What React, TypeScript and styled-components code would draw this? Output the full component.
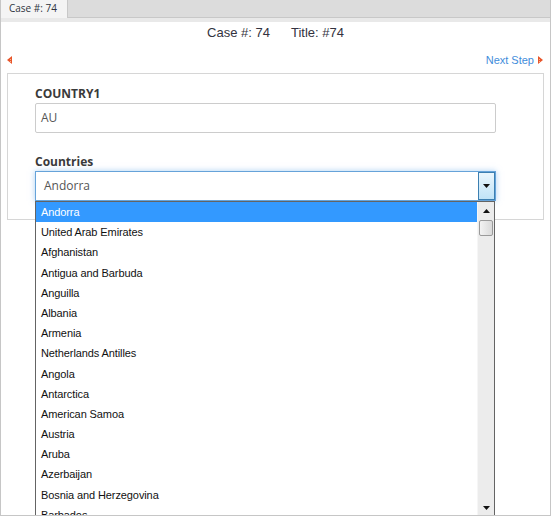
import React from "react";
import styled, { createGlobalStyle } from "styled-components";

const Global = createGlobalStyle`
  html, body { margin: 0; padding: 0; background: #fff; }
  * { box-sizing: border-box; }
`;

const Frame = styled.div`
  position: relative;
  width: 551px;
  height: 516px;
  overflow: hidden;
  background: #fff;
  border-left: 1px solid #c6c6c6;
  border-right: 1px solid #c6c6c6;
  border-bottom: 1px solid #c6c6c6;
  font-family: "Liberation Sans", Arial, sans-serif;
`;

const TabStrip = styled.div`
  display: flex;
  height: 18px;
  background: #dcdcdc;
  border-bottom: 1px solid #c8c8c8;
`;

const Tab = styled.div`
  width: 67px;
  height: 18px;
  padding-left: 8px;
  background: #f4f4f4;
  border-right: 1px solid #c8c8c8;
  font-family: "Open Sans", sans-serif;
  font-size: 10px;
  line-height: 17px;
  color: #2f3440;
`;

const TabBand = styled.div`
  height: 4px;
  background: #e9e9e9;
`;

const Header = styled.div`
  display: flex;
  justify-content: center;
  gap: 21px;
  margin-top: 3px;
  height: 16px;
  font-size: 13px;
  line-height: 16px;
  color: #333340;
`;

const NavRow = styled.div`
  display: flex;
  justify-content: space-between;
  align-items: center;
  height: 18px;
  margin-top: 10px;
  padding: 0 6px 0 6px;
`;

const NextLink = styled.a`
  display: flex;
  align-items: center;
  gap: 4px;
  font-size: 11px;
  color: #3f8ddb;
  text-decoration: none;
`;

const Panel = styled.div`
  margin: 4px 6px 0 6px;
  border: 1px solid #d6d6d6;
  padding: 12px 0 18px 27px;
`;

const Field = styled.div<{ $gap?: number }>`
  display: flex;
  flex-direction: column;
  margin-top: ${(p) => p.$gap ?? 0}px;
`;

const Label = styled.div`
  font-family: "Open Sans", sans-serif;
  font-weight: 700;
  font-size: 12px;
  line-height: 16px;
  color: #3a3a3a;
  margin-bottom: 1px;
`;

const TextBox = styled.div`
  width: 461px;
  height: 30px;
  border: 1px solid #cccccc;
  border-radius: 2px;
  padding-left: 5px;
  font-family: "Open Sans", sans-serif;
  font-size: 12px;
  line-height: 28px;
  color: #555;
`;

const SelectWrap = styled.div`
  position: relative;
  width: 461px;
`;

const SelectBox = styled.div`
  display: flex;
  justify-content: space-between;
  height: 30px;
  border: 1px solid #66a3d9;
  box-shadow: 0 0 6px rgba(102, 170, 233, 0.55);
  padding-left: 8px;
  font-family: "Open Sans", sans-serif;
  font-size: 12px;
  line-height: 28px;
  color: #555;
`;

const DropBtn = styled.div`
  display: flex;
  align-items: center;
  justify-content: center;
  width: 17px;
  height: 28px;
  border: 1px solid #3c7fb1;
  background: linear-gradient(#eaf6fd, #c0e3f7);
`;

const ListPopup = styled.div`
  position: absolute;
  top: 30px;
  left: 0;
  width: 460px;
  height: 316px;
  display: flex;
  border: 1px solid #646464;
  background: #fff;
`;

const Options = styled.div`
  flex: 1;
  overflow: hidden;
`;

const Option = styled.div<{ $sel?: boolean }>`
  height: 20.2px;
  padding-left: 5px;
  font-size: 11px;
  line-height: 21px;
  letter-spacing: -0.1px;
  color: ${(p) => (p.$sel ? "#fff" : "#111")};
  background: ${(p) => (p.$sel ? "#3399ff" : "transparent")};
  white-space: nowrap;
`;

const ScrollBar = styled.div`
  width: 17px;
  display: flex;
  flex-direction: column;
  background: #ececec;
  border-left: 1px solid #f6f6f6;
`;

const ScrollArrow = styled.div`
  height: 17px;
  display: flex;
  align-items: center;
  justify-content: center;
`;

const Thumb = styled.div`
  height: 16px;
  margin: 1px 1px 0;
  border: 1px solid #9a9a9a;
  border-radius: 2px;
  background: linear-gradient(90deg, #f3f3f3, #dadada);
`;

const Track = styled.div`
  flex: 1;
`;

const countries = [
  "Andorra",
  "United Arab Emirates",
  "Afghanistan",
  "Antigua and Barbuda",
  "Anguilla",
  "Albania",
  "Armenia",
  "Netherlands Antilles",
  "Angola",
  "Antarctica",
  "American Samoa",
  "Austria",
  "Aruba",
  "Azerbaijan",
  "Bosnia and Herzegovina",
  "Barbados",
  "Bangladesh",
];

const Arrow = ({ dir }: { dir: "left" | "right" }) => (
  <svg width="6" height="8" viewBox="0 0 6 8">
    {dir === "left" ? (
      <>
        <polygon points="5,0 5,8 0,4" fill="#e8552a" />
        <rect x="3" y="3" width="1" height="1" fill="#f7b08a" />
        <rect x="3" y="5" width="1" height="1" fill="#f7b08a" />
      </>
    ) : (
      <>
        <polygon points="0,0 0,8 5,4" fill="#e8552a" />
        <rect x="1" y="3" width="1" height="1" fill="#f7b08a" />
        <rect x="1" y="5" width="1" height="1" fill="#f7b08a" />
      </>
    )}
  </svg>
);

const Tri = ({ up, w = 7 }: { up?: boolean; w?: number }) => (
  <svg width={w} height="4" viewBox={`0 0 ${w} 4`}>
    <polygon
      points={up ? `0,4 ${w},4 ${w / 2},0` : `0,0 ${w},0 ${w / 2},4`}
      fill="#111"
    />
  </svg>
);

export default function App() {
  return (
    <>
      <Global />
      <Frame>
        <TabStrip>
          <Tab>Case #: 74</Tab>
        </TabStrip>
        <TabBand />
        <Header>
          <span>Case #: 74</span>
          <span>Title: #74</span>
        </Header>
        <NavRow>
          <Arrow dir="left" />
          <NextLink href="#">
            Next Step
            <Arrow dir="right" />
          </NextLink>
        </NavRow>
        <Panel>
          <Field>
            <Label>COUNTRY1</Label>
            <TextBox>AU</TextBox>
          </Field>
          <Field $gap={21}>
            <Label>Countries</Label>
            <SelectWrap>
              <SelectBox>
                Andorra
                <DropBtn>
                  <Tri />
                </DropBtn>
              </SelectBox>
              <ListPopup>
                <Options>
                  {countries.map((c, i) => (
                    <Option key={c} $sel={i === 0}>
                      {c}
                    </Option>
                  ))}
                </Options>
                <ScrollBar>
                  <ScrollArrow>
                    <Tri up w={7} />
                  </ScrollArrow>
                  <Thumb />
                  <Track />
                  <ScrollArrow>
                    <Tri w={7} />
                  </ScrollArrow>
                </ScrollBar>
              </ListPopup>
            </SelectWrap>
          </Field>
        </Panel>
      </Frame>
    </>
  );
}
